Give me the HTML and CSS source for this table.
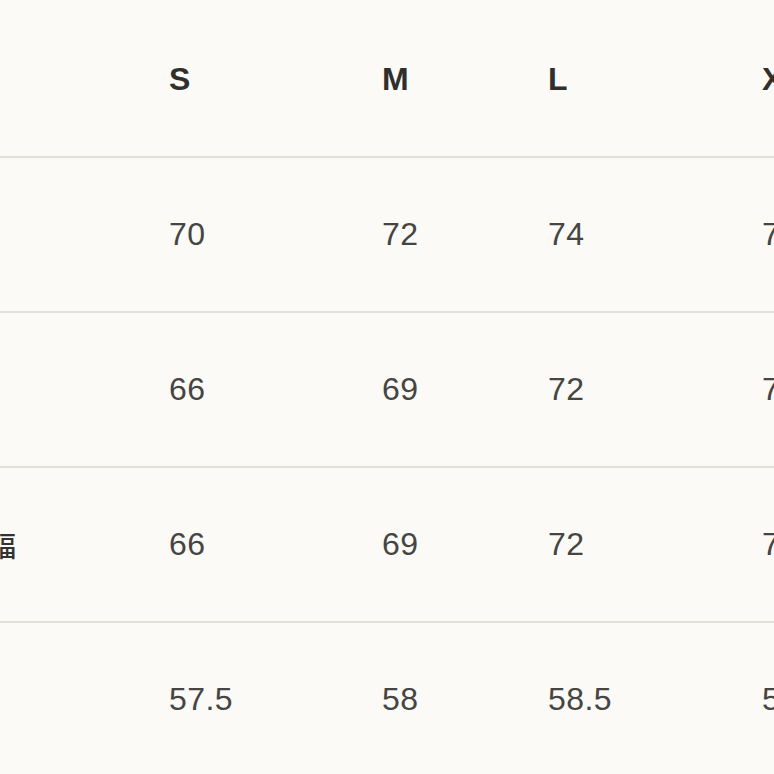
FILE: index.html
```html
<!DOCTYPE html>
<html lang="ja">
<head>
<meta charset="utf-8">
<title>サイズ表</title>
<link rel="stylesheet" href="styles.css">
</head>
<body>
<div class="size-table">
  <div class="row head">
    <div class="cell label"></div>
    <div class="cell">S</div>
    <div class="cell">M</div>
    <div class="cell">L</div>
    <div class="cell">XL</div>
  </div>
  <div class="row">
    <div class="cell label">着丈</div>
    <div class="cell">70</div>
    <div class="cell">72</div>
    <div class="cell">74</div>
    <div class="cell">76</div>
  </div>
  <div class="row">
    <div class="cell label">身幅</div>
    <div class="cell">66</div>
    <div class="cell">69</div>
    <div class="cell">72</div>
    <div class="cell">75</div>
  </div>
  <div class="row">
    <div class="cell label">袖口幅</div>
    <div class="cell">66</div>
    <div class="cell">69</div>
    <div class="cell">72</div>
    <div class="cell">75</div>
  </div>
  <div class="row">
    <div class="cell label">袖丈</div>
    <div class="cell">57.5</div>
    <div class="cell">58</div>
    <div class="cell">58.5</div>
    <div class="cell">59</div>
  </div>
</div>
</body>
</html>
```
FILE: styles.css
```css
html, body {
  margin: 0;
  padding: 0;
  background: #fbfaf6;
  overflow: hidden;
}
body {
  width: 774px;
  height: 774px;
  font-family: "Liberation Sans", Arial, "Noto Sans CJK JP", sans-serif;
  color: #454543;
}
.size-table {
  margin-top: 3px;
  margin-left: -68px;
  width: 1100px;
}
.row {
  display: grid;
  grid-template-columns: 237px 213px 166px 214px 214px;
  height: 155px;
  box-sizing: border-box;
  border-bottom: 2px solid #e2e0db;
  align-items: center;
}
.cell {
  font-size: 32px;
  letter-spacing: 0.4px;
  white-space: nowrap;
}
.label {
  font-family: "Noto Sans CJK JP", sans-serif;
  font-size: 28px;
  font-weight: 500;
  letter-spacing: 0;
  color: #333331;
}
.head .cell {
  font-weight: bold;
  color: #2f2f2d;
}
```
